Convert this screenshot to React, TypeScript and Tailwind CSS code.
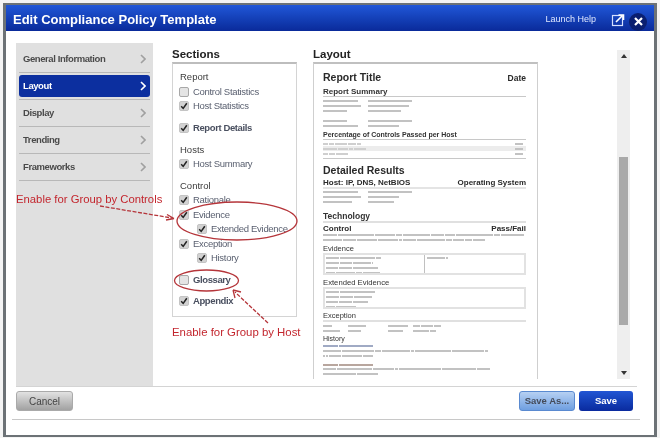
import React from "react";

const font = "[font-family:'Liberation_Sans',Arial,sans-serif]";

function Chevron({ active }: { active?: boolean }) {
  return (
    <svg width="6" height="10" viewBox="0 0 6 10" className="shrink-0">
      <path d="M1 1 L5 5 L1 9" fill="none" stroke={active ? "#ffffff" : "#a0a0a0"} strokeWidth="1.6" />
    </svg>
  );
}

function NavItem({ label, active }: { label: string; active?: boolean }) {
  return (
    <div className="h-[27px] pt-[2px] border-b border-b-[#b8b8b8]">
      <div
        className={
          active
            ? "h-[22px] flex items-center justify-between pl-[4px] pr-[4px] rounded-[3px] bg-[#0c2f9f] text-white"
            : "h-[22px] flex items-center justify-between pl-[4px] pr-[4px] text-[#4a4a4a]"
        }
      >
        <span className="pt-[1px] text-[9.5px] font-bold tracking-[-0.42px]">{label}</span>
        <Chevron active={active} />
      </div>
    </div>
  );
}

function Check({ checked }: { checked: boolean }) {
  return (
    <span
      className={
        checked
          ? "w-[10px] h-[10px] rounded-[2px] bg-[#d2d2d2] border border-[#c4c4c4] flex items-center justify-center shrink-0"
          : "w-[10px] h-[10px] rounded-[2px] bg-[#e4e4e4] border border-[#a8a8a8] shrink-0"
      }
    >
      {checked && (
        <svg width="8" height="8" viewBox="0 0 8 8">
          <path d="M1.2 4.2 L3.2 6.4 L6.8 1.2" fill="none" stroke="#222" strokeWidth="1.5" />
        </svg>
      )}
    </span>
  );
}

type Sec = { label: string; mt: string; kind: "head" | "item" | "sub" | "bold"; on?: boolean };
const sections: Sec[] = [
  { label: "Report", mt: "mt-0", kind: "head" },
  { label: "Control Statistics", mt: "mt-[1px]", kind: "item", on: false },
  { label: "Host Statistics", mt: "mt-0", kind: "item", on: true },
  { label: "Report Details", mt: "mt-[8px]", kind: "bold", on: true },
  { label: "Hosts", mt: "mt-[8px]", kind: "head" },
  { label: "Host Summary", mt: "mt-0", kind: "item", on: true },
  { label: "Control", mt: "mt-[8px]", kind: "head" },
  { label: "Rationale", mt: "mt-0", kind: "item", on: true },
  { label: "Evidence", mt: "mt-[1px]", kind: "item", on: true },
  { label: "Extended Evidence", mt: "mt-0", kind: "sub", on: true },
  { label: "Exception", mt: "mt-[1px]", kind: "item", on: true },
  { label: "History", mt: "mt-0", kind: "sub", on: true },
  { label: "Glossary", mt: "mt-[8px]", kind: "bold", on: false },
  { label: "Appendix", mt: "mt-[7px]", kind: "bold", on: true },
];

function SectionRow({ s }: { s: Sec }) {
  if (s.kind === "head") {
    return <div className={`${s.mt} h-[14px] leading-[14px] pl-[1px] text-[9.5px] text-[#3c3c3c]`}>{s.label}</div>;
  }
  return (
    <div className={`${s.mt} h-[14px] flex items-center gap-[4px] whitespace-nowrap ${s.kind === "sub" ? "pl-[18px]" : ""}`}>
      <Check checked={!!s.on} />
      <span className={s.kind === "bold" ? "pt-[1px] text-[9.5px] font-bold text-[#4a5060] tracking-[-0.4px]" : "pt-[1px] text-[9.5px] text-[#5a6070] tracking-[-0.3px]"}>
        {s.label}
      </span>
    </div>
  );
}

function Bars({ cols, className = "", color = "bg-[#c2c2c2]" }: { cols: number[][]; className?: string; color?: string }) {
  return (
    <div className={`h-[2px] flex ${className}`}>
      {cols.map((segs, i) => (
        <div key={i} className={i === 0 && cols.length === 2 ? "w-[45px] flex gap-[1px]" : "flex gap-[1px]"}>
          {segs.map((w, j) => (
            <div key={j} className={`h-[2px] ${color}`} style={{ width: w }} />
          ))}
        </div>
      ))}
    </div>
  );
}

function Head({ children, className = "" }: { children: React.ReactNode; className?: string }) {
  return <div className={`text-[#333] ${className}`}>{children}</div>;
}

function Preview() {
  return (
    <div className="w-[225px] h-[317px] border-t-2 border-t-[#c0c0c0] border-x border-x-[#cfcfcf] pl-[9px] pr-[11px] pt-[7px] overflow-hidden text-[#2a2a2a] whitespace-nowrap">
      <div className="h-[14px] flex items-center justify-between">
        <span className="text-[10.5px] font-bold">Report Title</span>
        <span className="text-[8.5px] font-bold">Date</span>
      </div>
      <Head className="mt-[2px] h-[10px] leading-[9px] text-[8px] font-bold border-b border-b-[#c8c8c8]">Report Summary</Head>
      <Bars className="mt-[3px]" cols={[[35], [44]]} />
      <Bars className="mt-[3px]" cols={[[38], [41]]} />
      <Bars className="mt-[3px]" cols={[[24], [33]]} />
      <Bars className="mt-[8px]" cols={[[24], [44]]} />
      <Bars className="mt-[3px]" cols={[[35], [31]]} />
      <Head className="mt-[3px] h-[10px] leading-[9px] border-b border-b-[#c8c8c8] text-[7px] font-bold">Percentage of Controls Passed per Host</Head>
      <div className="mt-[1px] h-[5px] flex items-center justify-between pr-[3px]">
        <Bars cols={[[5, 5, 12, 8, 4]]} color="bg-[#cfcfcf]" />
        <Bars cols={[[8]]} />
      </div>
      <div className="h-[5px] flex items-center justify-between pr-[3px] bg-[#ececec]">
        <Bars cols={[[14, 10, 4, 12]]} color="bg-[#cfcfcf]" />
        <Bars cols={[[8]]} />
      </div>
      <div className="h-[5px] flex items-center justify-between pr-[3px]">
        <Bars cols={[[5, 6, 12]]} color="bg-[#cfcfcf]" />
        <Bars cols={[[8]]} />
      </div>
      <div className="mt-[2px] border-b border-b-[#c8c8c8]" />
      <div className="mt-[4px] h-[14px] leading-[14px] text-[10.5px] font-bold">Detailed Results</div>
      <div className="mt-[1px] h-[11px] flex justify-between leading-[9px] text-[8px] font-bold border-b-2 border-b-[#e4e4e4]">
        <span>Host: IP, DNS, NetBIOS</span>
        <span>Operating System</span>
      </div>
      <Bars className="mt-[2px]" cols={[[35], [44]]} />
      <Bars className="mt-[3px]" cols={[[38], [31]]} />
      <Bars className="mt-[3px]" cols={[[29], [26]]} />
      <Head className="mt-[8px] h-[12px] leading-[10px] text-[8.5px] font-bold border-b-2 border-b-[#e0e0e0]">Technology</Head>
      <div className="mt-[1px] h-[10px] leading-[10px] flex justify-between text-[8px] font-bold">
        <span>Control</span>
        <span>Pass/Fail</span>
      </div>
      <Bars cols={[[14, 36, 20, 6, 27, 13, 10, 37, 6, 23]]} />
      <Bars className="mt-[3px]" cols={[[19, 13, 20, 20, 3, 13, 28, 6, 11, 7, 12]]} />
      <Head className="mt-[3px] h-[9px] leading-[9px] text-[7.5px]">Evidence</Head>
      <div className="h-[22px] border-2 border-[#e2e2e2] flex overflow-hidden">
        <div className="w-[100px] border-r border-r-[#c0c0c0] pl-[1px] pt-[2px] flex flex-col gap-[3px]">
          <Bars cols={[[13, 35, 5]]} />
          <Bars cols={[[13, 12, 18, 1]]} />
          <Bars cols={[[12, 13, 25]]} />
          <Bars cols={[[9, 19, 6, 17]]} />
        </div>
        <div className="pl-[2px] pt-[2px]">
          <Bars cols={[[18, 2]]} />
        </div>
      </div>
      <Head className="mt-[3px] h-[9px] leading-[9px] text-[7.7px]">Extended Evidence</Head>
      <div className="h-[22px] border-2 border-[#e2e2e2] pl-[1px] pt-[2px] flex flex-col gap-[3px] overflow-hidden">
        <Bars cols={[[13, 35]]} />
        <Bars cols={[[13, 13, 18]]} />
        <Bars cols={[[12, 13, 15]]} />
        <Bars cols={[[9, 20]]} />
      </div>
      <Head className="mt-[3px] h-[10px] leading-[8px] text-[7.5px] border-b-2 border-b-[#e0e0e0]">Exception</Head>
      <div className="mt-[3px] h-[2px] flex">
        <Bars className="w-[25px]" cols={[[9]]} />
        <Bars className="w-[40px]" cols={[[18]]} />
        <Bars className="w-[25px]" cols={[[20]]} />
        <Bars cols={[[7, 12, 7]]} />
      </div>
      <div className="mt-[3px] h-[2px] flex">
        <Bars className="w-[25px]" cols={[[17]]} />
        <Bars className="w-[40px]" cols={[[13]]} />
        <Bars className="w-[25px]" cols={[[15]]} />
        <Bars cols={[[16, 6]]} />
      </div>
      <Head className="mt-[2px] h-[10px] leading-[10px] text-[7px]">History</Head>
      <Bars className="mt-[1px]" cols={[[15, 34]]} color="bg-[#a0aac4]" />
      <Bars className="mt-[3px]" cols={[[18, 32, 6, 28, 3, 36, 32, 3]]} />
      <Bars className="mt-[3px]" cols={[[2, 2, 12, 20, 10]]} />
      <Bars className="mt-[7px]" cols={[[15, 34]]} color="bg-[#b8a69e]" />
      <Bars className="mt-[2px]" cols={[[13, 35, 21, 3, 42, 34, 13]]} />
      <Bars className="mt-[3px]" cols={[[33, 21]]} />
    </div>
  );
}

function Scrollbar() {
  return (
    <div className="mt-[7px] w-[13px] h-[329px] bg-[#eeeeee] flex flex-col items-center">
      <div className="h-[50px] w-full flex justify-center pt-[4px] shrink-0">
        <svg width="6" height="4" viewBox="0 0 6 4"><path d="M3 0 L6 4 L0 4 Z" fill="#333" /></svg>
      </div>
      <div className="mt-[57px] w-[9px] h-[168px] bg-[#a9a9a9] shrink-0" />
      <div className="grow" />
      <div className="pb-[4px]">
        <svg width="6" height="4" viewBox="0 0 6 4" className="block"><path d="M0 0 L6 0 L3 4 Z" fill="#333" /></svg>
      </div>
    </div>
  );
}

export default function App() {
  return (
    <div className={`relative w-[660px] h-[438px] bg-[#f4f4f4] overflow-hidden blur-[0.35px] ${font}`}>
      <div className="ml-[3px] mt-[3px] w-[654px] h-[434px] border-x-[3px] border-y-2 border-[#6c7276] bg-white flex flex-col">
        <header className="h-[26px] shrink-0 flex items-center bg-gradient-to-b from-[#2157d8] to-[#0a2a9a] pl-[7px] pr-[7px]">
          <h1 className="mt-[3px] text-[13px] font-bold text-white whitespace-nowrap">Edit Compliance Policy Template</h1>
          <div className="grow" />
          <span className="mt-[4px] text-[9px] text-[#dfe8ff] whitespace-nowrap">Launch Help</span>
          <svg width="14" height="14" viewBox="0 0 14 14" className="ml-[15px] mt-[4px]">
            <rect x="1.5" y="2.5" width="10" height="10" fill="none" stroke="#d5e0ff" strokeWidth="1.2" />
            <path d="M5 9 L11 3 M7.5 2 H12.5 V7" fill="none" stroke="#ffffff" strokeWidth="1.6" />
          </svg>
          <div className="ml-[4px] mt-[7px] w-[18px] h-[18px] rounded-full bg-[#0a1f70] flex items-center justify-center">
            <svg width="9" height="9" viewBox="0 0 9 9"><path d="M1 1 L8 8 M8 1 L1 8" stroke="#fff" strokeWidth="2.2" /></svg>
          </div>
        </header>

        <main className="h-[355px] shrink-0 flex pt-[12px] pl-[10px]">
          <nav className="w-[137px] h-[343px] bg-[#e0e0e0] px-[3px] pt-[3px]">
            <NavItem label="General Information" />
            <NavItem label="Layout" active />
            <NavItem label="Display" />
            <NavItem label="Trending" />
            <NavItem label="Frameworks" />
          </nav>
          <section className="ml-[19px] w-[125px]">
            <h2 className="h-[19px] leading-[23px] text-[11.5px] font-bold text-[#222]">Sections</h2>
            <div className="h-[255px] border border-[#d4d4d4] border-t-2 border-t-[#bdbdbd] pt-[6px] pl-[6px]">
              {sections.map((s) => (
                <SectionRow key={s.label} s={s} />
              ))}
            </div>
          </section>
          <section className="ml-[16px] w-[225px]">
            <h2 className="h-[19px] leading-[23px] text-[11.5px] font-bold text-[#222]">Layout</h2>
            <Preview />
          </section>
          <div className="ml-[79px]">
            <Scrollbar />
          </div>
        </main>

        <div className="ml-[10px] w-[621px] border-t border-t-[#d4d4d4]" />
        <footer className="mt-[4px] h-[20px] flex pl-[10px] pr-[21px] shrink-0">
          <button className="w-[57px] h-[20px] rounded-[3px] bg-gradient-to-b from-[#e2e2e2] to-[#a2a2a2] text-[10px] text-[#444] border border-[#aaaaaa]">Cancel</button>
          <div className="grow" />
          <button className="w-[56px] h-[20px] rounded-[3px] bg-gradient-to-b from-[#b6d0f2] to-[#6f9fe0] text-[9.5px] font-bold text-[#444b5a] border border-[#5a8ad0]">Save As...</button>
          <button className="ml-[4px] w-[54px] h-[20px] rounded-[3px] bg-gradient-to-b from-[#2256d4] to-[#0a2a9e] text-[9.5px] font-bold text-white">Save</button>
        </footer>
        <div className="mt-[8px] ml-[6px] w-[628px] border-t border-t-[#c8c8c8]" />
      </div>

      <div className="absolute left-[16px] top-[192px] text-[11.3px] leading-[14px] text-[#c3262e] whitespace-nowrap">Enable for Group by Controls</div>
      <div className="absolute left-[172px] top-[325px] text-[11.4px] leading-[14px] text-[#c3262e] whitespace-nowrap">Enable for Group by Host</div>

      <svg className="absolute left-0 top-0 pointer-events-none" width="660" height="438" viewBox="0 0 660 438" fill="none">
        <ellipse cx="237" cy="221" rx="60" ry="19" stroke="#b5353a" strokeWidth="1.3" />
        <ellipse cx="206.5" cy="280.5" rx="32" ry="10.5" stroke="#b5353a" strokeWidth="1.3" />
        <path d="M100 206 L172 218" stroke="#b5353a" strokeWidth="1.3" strokeDasharray="4 1.5" />
        <path d="M174 218.5 L166 220 M174 218.5 L167 214.5" stroke="#b5353a" strokeWidth="1.3" />
        <path d="M268 323 L235 292" stroke="#b5353a" strokeWidth="1.3" strokeDasharray="4 1.5" />
        <path d="M233 290 L235 298 M233 290 L241 292" stroke="#b5353a" strokeWidth="1.3" />
      </svg>
    </div>
  );
}
